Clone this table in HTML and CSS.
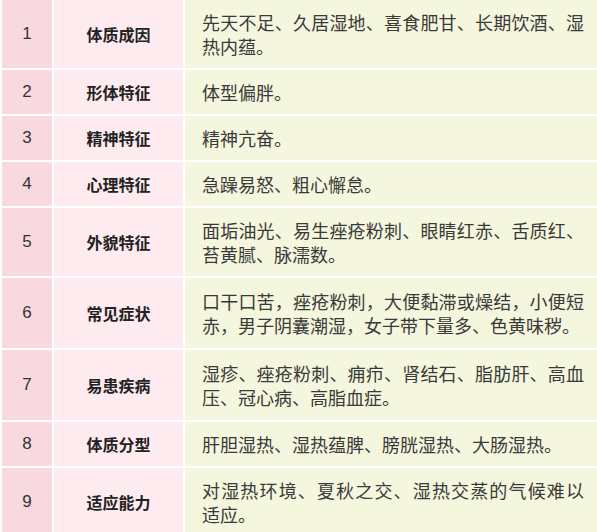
FILE: index.html
```html
<!DOCTYPE html>
<html lang="zh-CN">
<head>
<meta charset="utf-8">
<title>湿热质</title>
<link rel="stylesheet" href="styles.css">
</head>
<body>
<table class="tz">
  <colgroup>
    <col class="c-num">
    <col class="c-key">
    <col class="c-val">
  </colgroup>
  <tbody>
    <tr><td class="num">1</td><td class="key">体质成因</td><td class="val">先天不足、久居湿地、喜食肥甘、长期饮酒、湿热内蕴。</td></tr>
    <tr><td class="num">2</td><td class="key">形体特征</td><td class="val">体型偏胖。</td></tr>
    <tr><td class="num">3</td><td class="key">精神特征</td><td class="val">精神亢奋。</td></tr>
    <tr><td class="num">4</td><td class="key">心理特征</td><td class="val">急躁易怒、粗心懈怠。</td></tr>
    <tr><td class="num">5</td><td class="key">外貌特征</td><td class="val">面垢油光、易生痤疮粉刺、眼睛红赤、舌质红、苔黄腻、脉濡数。</td></tr>
    <tr class="tall"><td class="num">6</td><td class="key">常见症状</td><td class="val">口干口苦，痤疮粉刺，大便黏滞或燥结，小便短赤，男子阴囊潮湿，女子带下量多、色黄味秽。</td></tr>
    <tr class="tall"><td class="num">7</td><td class="key">易患疾病</td><td class="val">湿疹、痤疮粉刺、痈疖、肾结石、脂肪肝、高血压、冠心病、高脂血症。</td></tr>
    <tr><td class="num">8</td><td class="key">体质分型</td><td class="val">肝胆湿热、湿热蕴脾、膀胱湿热、大肠湿热。</td></tr>
    <tr><td class="num">9</td><td class="key">适应能力</td><td class="val">对湿热环境、夏秋之交、湿热交蒸的气候难以<span class="keep">适应。</span></td></tr>
  </tbody>
</table>
</body>
</html>
```

FILE: styles.css
```css
html, body {
  margin: 0;
  padding: 0;
  background: #ffffff;
}

.tz {
  border-collapse: collapse;
  width: 599px;
  margin-top: -2px;
  table-layout: fixed;
  font-family: "Noto Sans CJK SC", "Noto Sans", sans-serif;
}

.c-num { width: 52px; }
.c-key { width: 131px; }
.c-val { width: 416px; }

.tz td {
  border: 2px solid #ffffff;
  padding: 10px 0;
  line-height: 24px;
  vertical-align: middle;
}

.tz td.num {
  background: #f8d9df;
  text-align: center;
  font-family: "Liberation Sans", Arial, sans-serif;
  font-size: 17px;
  color: #333333;
}

.tz td.key {
  background: #fdebef;
  text-align: center;
  font-size: 16px;
  font-weight: 700;
  color: #222222;
}

.tz td.val {
  background: #f4f6dd;
  padding-left: 17px;
  padding-right: 15px;
  font-size: 18px;
  color: #3a3a3a;
  text-align: justify;
}

.tz td.val .keep {
  white-space: nowrap;
}

.tz tr.tall td {
  padding-top: 11px;
  padding-bottom: 11px;
}
```
